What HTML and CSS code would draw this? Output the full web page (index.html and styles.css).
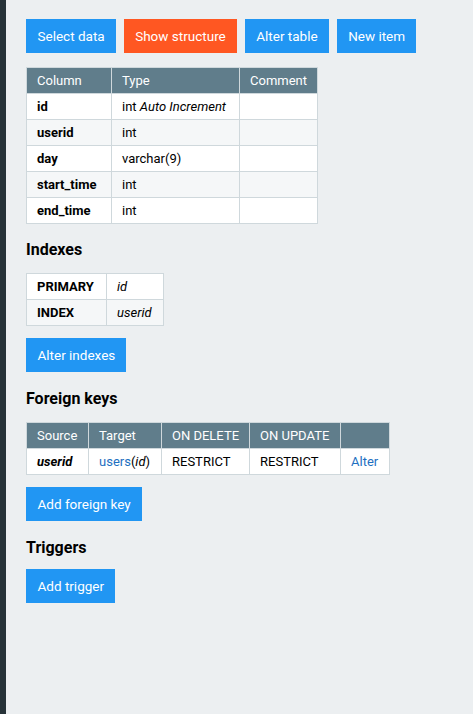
FILE: index.html
```html
<!DOCTYPE html>
<html>
<head>
<meta charset="utf-8">
<link rel="stylesheet" href="styles.css">
</head>
<body>
<div class="layout">
  <aside class="sidebar"></aside>
  <main class="content">
    <div class="links">
      <a class="btn">Select data</a>
      <a class="btn btn-active">Show structure</a>
      <a class="btn">Alter table</a>
      <a class="btn">New item</a>
    </div>
    <table class="tbl">
      <thead>
        <tr><th class="w-col">Column</th><th class="w-type">Type</th><th class="w-comment">Comment</th></tr>
      </thead>
      <tbody>
        <tr><th>id</th><td>int <i>Auto Increment</i></td><td></td></tr>
        <tr><th>userid</th><td>int</td><td></td></tr>
        <tr><th>day</th><td>varchar(9)</td><td></td></tr>
        <tr><th>start_time</th><td>int</td><td></td></tr>
        <tr><th>end_time</th><td>int</td><td></td></tr>
      </tbody>
    </table>

    <h3 class="h-tbl">Indexes</h3>
    <table class="tbl">
      <tbody>
        <tr><th class="w-idx1">PRIMARY</th><td class="w-idx2"><i>id</i></td></tr>
        <tr><th>INDEX</th><td><i>userid</i></td></tr>
      </tbody>
    </table>
    <div class="links links-after"><a class="btn">Alter indexes</a></div>

    <h3 class="h-tbl">Foreign keys</h3>
    <table class="tbl">
      <thead>
        <tr><th class="w-src">Source</th><th class="w-tgt">Target</th><th class="w-del">ON DELETE</th><th class="w-upd">ON UPDATE</th><th class="w-alter"></th></tr>
      </thead>
      <tbody>
        <tr><th><i>userid</i></th><td><a class="lnk">users</a>(<i>id</i>)</td><td>RESTRICT</td><td>RESTRICT</td><td><a class="lnk">Alter</a></td></tr>
      </tbody>
    </table>
    <div class="links links-after"><a class="btn">Add foreign key</a></div>

    <h3>Triggers</h3>
    <div class="links"><a class="btn">Add trigger</a></div>
  </main>
</div>
</body>
</html>
```
FILE: styles.css
```css
html, body {
  margin: 0;
  padding: 0;
  height: 100%;
}
body {
  font-family: Roboto, "Liberation Sans", sans-serif;
  font-size: 13px;
  color: #000;
  background: #eceff1;
}
.layout {
  display: flex;
  min-height: 714px;
}
.sidebar {
  width: 6px;
  background: #263238;
  flex: none;
}
.content {
  padding: 19px 20px 20px 20px;
  flex: 1;
}
.links {
  display: flex;
  gap: 8px;
  margin-bottom: 14px;
}
.links-after {
  margin-bottom: 17px;
}
.btn {
  display: inline-block;
  background: #2196f3;
  color: #fff;
  font-size: 13.5px;
  line-height: 18px;
  padding: 8px 11px 8px 11.5px;
  text-decoration: none;
  white-space: nowrap;
}
.btn-active {
  background: #ff5722;
}
.tbl {
  border-collapse: collapse;
  border: 1px solid #b0bec5;
  margin-bottom: 12px;
}
.tbl th, .tbl td {
  border: 1px solid #cfd8dc;
  padding: 4px 10px;
  line-height: 17px;
  text-align: left;
  vertical-align: top;
  font-size: 13px;
  white-space: nowrap;
}
.tbl tbody th {
  font-weight: bold;
}
.tbl tbody tr {
  background: #fff;
}
.tbl tbody tr:nth-child(even) {
  background: #f5f7f8;
}
.tbl thead th {
  background: #607d8b;
  color: #fff;
  font-weight: normal;
  border-color: #cfd8dc;
}
.w-col { width: 64px; }
.w-type { width: 107px; }
.w-comment { width: 57px; }
.w-idx1 { width: 59px; }
.w-idx2 { width: 36px; }
.w-src { width: 41px; }
.w-tgt { width: 52px; }
.w-del { width: 67px; }
.w-upd { width: 70px; }
.w-alter { width: 28px; }
h3 {
  font-size: 16px;
  font-weight: bold;
  margin: 16px 0 11px;
  line-height: 20px;
}
.h-tbl {
  margin-bottom: 13px;
}
.lnk {
  color: #1e6fc1;
  text-decoration: none;
}
```
